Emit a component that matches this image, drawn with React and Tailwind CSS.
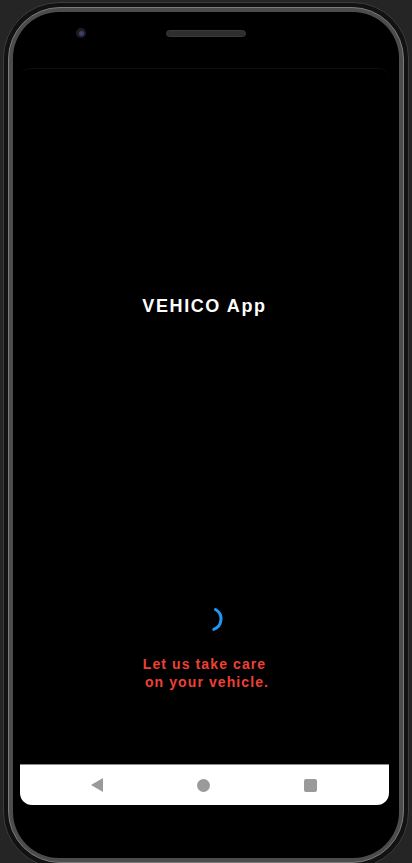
export default function App() {
  return (
    <div className="w-[412px] h-[863px] overflow-hidden bg-[#252525] pt-[2px] px-[3px]">
      {/* phone outer body */}
      <div className="h-[866px] rounded-[56px] border border-[#3c3c3c] bg-[#121212] p-[4px]">
        {/* metallic ring */}
        <div className="h-full rounded-[52px] border border-[#7a7a7a] bg-[#4c4c4c] p-[4px]">
          {/* screen glass */}
          <div className="h-full rounded-[46px] bg-black flex flex-col items-center pt-[16px]">
            {/* camera + speaker */}
            <div className="relative w-full h-[10px]">
              <div className="absolute left-[63px] top-0 w-[10px] h-[10px] rounded-full bg-[#1c1c22] flex items-center justify-center">
                <div className="w-[5px] h-[5px] rounded-full bg-[#3a3f6e]" />
              </div>
              <div className="absolute left-[153px] top-[2px] w-[80px] h-[7px] rounded-full bg-[#2e2e2e] border border-[#3a3a3a]" />
            </div>
            {/* app area */}
            <div className="mt-[30px] mr-[3px] w-[369px] h-[737px] flex flex-col items-center rounded-t-[10px] border-t border-[#0d0d0d]">
              <div
                className="mt-[225px] h-[24px] leading-[24px] text-white font-bold text-[18px] tracking-[1.6px]"
                style={{ fontFamily: '"Liberation Sans", Arial, sans-serif' }}
              >
                VEHICO App
              </div>
              <svg className="mt-[288px] ml-[10px]" width="26" height="26" viewBox="0 0 26 26">
                <path
                  d="M 18.5 3.47 A 11 11 0 0 1 16.76 23.34"
                  fill="none"
                  stroke="#2196f3"
                  strokeWidth="3"
                  strokeLinecap="round"
                />
              </svg>
              <div
                className="mt-[23px] whitespace-pre text-center text-[14px] leading-[18px] font-bold text-[#ee4035] tracking-[1.1px]"
                style={{ fontFamily: '"Liberation Sans", Arial, sans-serif' }}
              >
                {"Let us take care\n on your vehicle."}
              </div>
              <div className="flex-1" />
              {/* nav bar */}
              <div className="w-full h-[41px] bg-white border-t border-[#8c8c8c] rounded-b-[12px] flex items-center pl-[71px] gap-[94px]">
                <svg width="12" height="14" viewBox="0 0 12 14">
                  <path d="M12 0 L12 14 L0 7 Z" fill="#9a9a9a" />
                </svg>
                <div className="w-[13px] h-[13px] rounded-full bg-[#9a9a9a]" />
                <div className="w-[13px] h-[13px] rounded-[2px] bg-[#9a9a9a]" />
              </div>
            </div>
          </div>
        </div>
      </div>
    </div>
  );
}
